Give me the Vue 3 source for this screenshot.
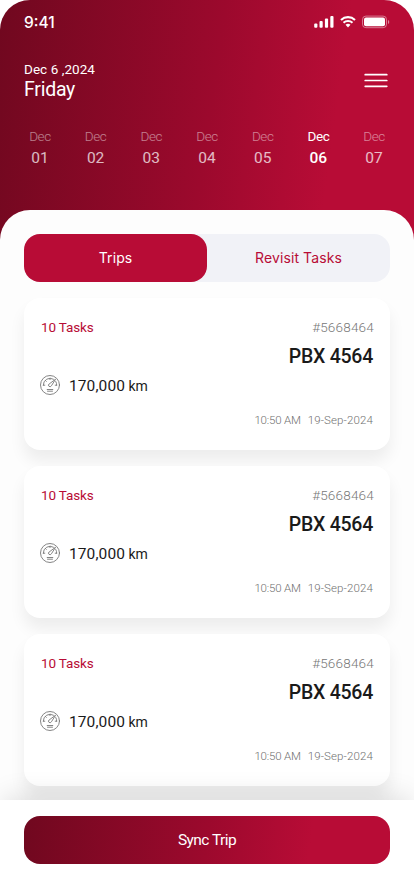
<script setup>
const days = ['01', '02', '03', '04', '05', '06', '07']
const trips = [1, 2, 3].map((id) => ({
  id,
  tasks: '10 Tasks',
  code: '#5668464',
  plate: 'PBX 4564',
  distance: '170,000',
  time: '10:50 AM',
  date: '19-Sep-2024',
}))
</script>

<template>
  <main class="screen">
    <header class="hero">
      <div class="status">
        <span class="clock">9:41</span>
        <svg class="indicators" width="76" height="14" viewBox="0 0 76 14" fill="#fff">
          <rect x="0.2" y="8.5" width="3.2" height="4.2" rx="1" />
          <rect x="5.5" y="6" width="3.2" height="6.7" rx="1" />
          <rect x="10.9" y="3.5" width="3.2" height="9.2" rx="1" />
          <rect x="16.3" y="1" width="3.2" height="11.7" rx="1" />
          <g fill="none" stroke="#fff" stroke-width="2.1">
            <path d="M27 4.9a10.2 10.2 0 0 1 14 0" />
            <path d="M29.5 7.7a6.6 6.6 0 0 1 9 0" />
          </g>
          <path d="M34 12.4l-2.5-2.6a3.7 3.7 0 0 1 5 0z" />
          <rect x="48.5" y="1.1" width="24" height="11.6" rx="3.4" fill="none" stroke="#fff" stroke-opacity=".45" />
          <rect x="50" y="2.6" width="21" height="8.6" rx="2" />
          <path d="M74 5v4c1.7-.7 1.7-3.3 0-4z" opacity=".5" />
        </svg>
      </div>
      <div class="heading">
        <div>
          <div class="full-date">Dec 6 ,2024</div>
          <div class="weekday">Friday</div>
        </div>
        <svg class="menu" width="24" height="16" viewBox="0 0 24 16" stroke="#fff" stroke-width="1.7" stroke-linecap="round">
          <path d="M1.2 1.7h21.6M1.2 7.5h21.6M1.2 13.3h21.6" />
        </svg>
      </div>
      <div class="days">
        <div v-for="day in days" :key="day" class="day" :class="{ active: day === '06' }">
          <span class="month">Dec</span>
          <span class="number">{{ day }}</span>
        </div>
      </div>
    </header>

    <section class="panel">
      <div class="tabs">
        <div class="tab selected">Trips</div>
        <div class="tab">Revisit Tasks</div>
      </div>
      <div class="cards">
        <article v-for="trip in trips" :key="trip.id" class="card">
          <div class="row top">
            <span class="tasks">{{ trip.tasks }}</span>
            <span class="code">{{ trip.code }}</span>
          </div>
          <div class="plate">{{ trip.plate }}</div>
          <div class="distance">
            <svg width="20" height="20" viewBox="0 0 20 20" fill="none" stroke="#777" stroke-width=".9" stroke-linecap="round">
              <circle cx="10" cy="10" r="9.5" />
              <path d="M3.3 10.2a6.8 6.8 0 0 1 10.2-6M15.8 6.5a6.8 6.8 0 0 1 .9 3.7M3.3 10.2h1.5M16.7 10.2h-1.5M5.3 5.4l1 1M10 3.3v1.3" />
              <path d="M15.2 4.5L9.1 9a1.5 1.5 0 1 0 2.1 2.1z" />
              <path d="M7.2 14.5h5.6M7.5 16.2h5" />
            </svg>
            <span class="amount">{{ trip.distance }}</span>
            <span class="unit">km</span>
          </div>
          <div class="stamp">
            <span class="time">{{ trip.time }}</span>
            <span class="date">{{ trip.date }}</span>
          </div>
        </article>
      </div>
    </section>

    <footer class="footer">
      <button class="sync">Sync Trip</button>
    </footer>
  </main>
</template>

<style>
body {
  background: #fff;
}
</style>

<style scoped>
.screen {
  width: 414px;
  height: 896px;
  display: flex;
  flex-direction: column;
  overflow: hidden;
  border-radius: 30px 30px 0 0;
  font-family: Roboto, "Liberation Sans", sans-serif;
  background: linear-gradient(98deg, #70081f 0%, #9c092d 50%, #b80c36 78%, #b80c36 100%) 0 0 / 414px 270px no-repeat;
  box-sizing: border-box;
}
.hero {
  height: 210px;
  flex: none;
  color: #fff;
  display: flex;
  flex-direction: column;
}
.status {
  display: flex;
  justify-content: space-between;
  align-items: flex-start;
  padding: 12px 24px 0;
  height: 32px;
}
.clock {
  font: 500 15.5px/21px Inter, sans-serif;
}
.indicators {
  margin: 3px 0 0;
}
.heading {
  display: flex;
  justify-content: space-between;
  padding: 16px 26px 0 24px;
}
.full-date {
  font-size: 13.5px;
  line-height: 18px;
  letter-spacing: 0.05px;
}
.weekday {
  font-size: 19.5px;
  line-height: 24px;
  letter-spacing: -0.25px;
}
.menu {
  margin-top: 13px;
}
.days {
  display: grid;
  grid-template-columns: repeat(7, 55.7px);
  justify-content: center;
  padding-top: 24px;
}
.day {
  display: flex;
  flex-direction: column;
  align-items: center;
}
.month {
  font-size: 13.5px;
  line-height: 20px;
  font-weight: 300;
  letter-spacing: -0.4px;
  opacity: .48;
}
.number {
  font-size: 15.5px;
  line-height: 24px;
  opacity: .72;
}
.active .month,
.active .number {
  opacity: 1;
  font-weight: 500;
}
.active .month {
  font-weight: 400;
}
.panel {
  flex: none;
  height: 590px;
  box-sizing: border-box;
  padding: 24px 24px 0;
  background: #fdfdfd;
  border-radius: 30px 30px 0 0;
}
.tabs {
  display: grid;
  grid-template-columns: 1fr 1fr;
  height: 48px;
  border-radius: 16px;
  background: #f1f2f7;
  color: #b80c36;
}
.tab {
  font: 400 14px/47px Inter, sans-serif;
  letter-spacing: 0.1px;
  text-align: center;
  border-radius: 16px;
}
.selected {
  background: #b80c36;
  color: #fff;
}
.cards {
  display: flex;
  flex-direction: column;
  gap: 16px;
  padding-top: 16px;
}
.card {
  height: 152px;
  box-sizing: border-box;
  padding: 18px 16px 0;
  border-radius: 16px;
  background: #fff;
  box-shadow: 0 11px 16px rgba(0, 0, 0, .065);
}
.row {
  display: flex;
  justify-content: space-between;
  font-size: 13.5px;
  line-height: 22px;
}
.tasks {
  margin-left: 1px;
  color: #b80c36;
  letter-spacing: -0.15px;
}
.code {
  color: #777;
  font-weight: 300;
  letter-spacing: 0.2px;
}
.plate {
  margin-top: 5px;
  padding-right: 1px;
  text-align: right;
  font-size: 19.5px;
  line-height: 27px;
  font-weight: 500;
  letter-spacing: -0.25px;
  color: #1a1a1a;
}
.distance {
  margin-top: 4px;
  height: 22px;
  display: flex;
  align-items: center;
  color: #1a1a1a;
  line-height: 22px;
}
.distance svg {
  margin-bottom: 1px;
}
.amount {
  margin-left: 9px;
  padding-top: 1px;
  width: 59.5px;
  font-size: 15.5px;
  letter-spacing: 0.1px;
}
.unit {
  font-size: 14px;
  padding-top: 1px;
}
.stamp {
  margin-top: 14px;
  padding-right: 1px;
  display: flex;
  justify-content: flex-end;
  gap: 7px;
  font-size: 11.5px;
  line-height: 20px;
  color: #707070;
  font-weight: 300;
}
.time {
  letter-spacing: -0.2px;
}
.date {
  letter-spacing: 0.12px;
}
.footer {
  flex: none;
  position: relative;
  height: 96px;
  box-sizing: border-box;
  padding: 16px 24px 0;
  background: #fff;
  box-shadow: 0 -8px 28px -6px rgba(0, 0, 0, .15);
}
.sync {
  display: block;
  width: 100%;
  height: 48px;
  padding: 0;
  border: 0;
  border-radius: 16px;
  color: #fff;
  font: 400 15.5px/49px Roboto, sans-serif;
  letter-spacing: -0.55px;
  background: linear-gradient(98deg, #70081f 0%, #9c092d 50%, #b80c36 78%, #b80c36 100%);
}
</style>
